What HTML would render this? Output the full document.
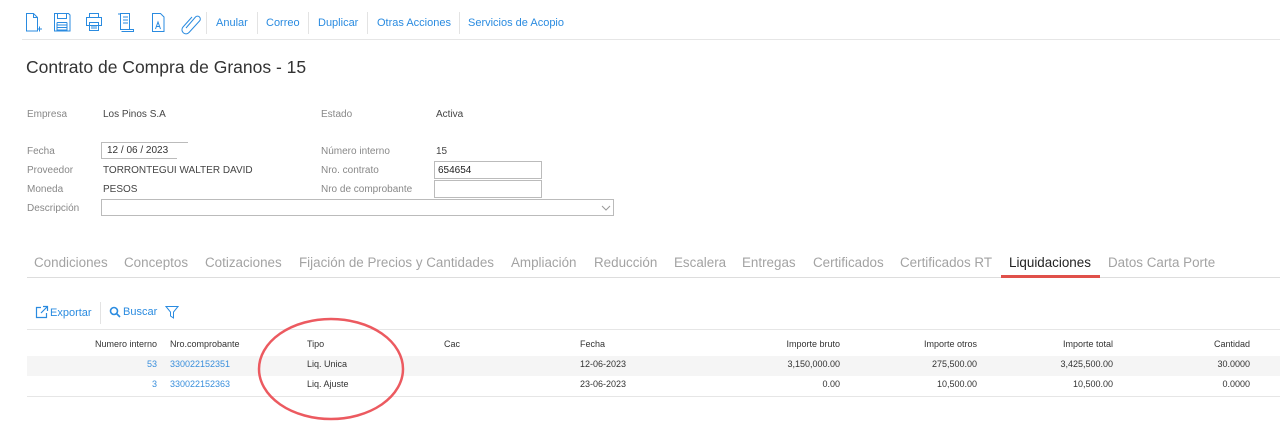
<!DOCTYPE html>
<html><head><meta charset="utf-8"><style>
*{margin:0;padding:0;box-sizing:border-box}
body{width:1280px;height:447px;background:#fff;font-family:"Liberation Sans",sans-serif;position:relative;overflow:hidden;color:#333}
.a{position:absolute;white-space:nowrap}
.lbl{font-size:10px;color:#888}
.val{font-size:10px;color:#444}
.tb{font-size:11px;color:#2a8be0;top:17px}
.sep{position:absolute;width:1px;background:#e3e3e3}
.tab{font-size:13.4px;color:#a3a3a3;top:255px}
.inp{position:absolute;border:1px solid #bbb;height:18px;font-size:10px;padding:3px 3px;color:#222}
.th{font-size:9px;color:#333;top:339px}
.td{font-size:9px;color:#333}
.lk{color:#3a8fdc}
.r{text-align:right}
</style></head><body>
<svg class="a" style="left:0;top:0" width="600" height="40" fill="none" stroke="#2a8be0" stroke-width="1">
<path d="M865 9 Q885 0 905 9" stroke="#ccc"/>
<path d="M26.5 13.5h7l4 4v13.5h-11z M33.5 13.5v4h4 M37 29h5 M39.5 26.5v5"/>
<path d="M54.5 13.5h14l1.5 1.5v16h-15.5z M57.5 13.5v5h9v-5 M57 22.5h10 M57 25h10 M57 27.5h10 M57 22.5v7.5h10v-7.5"/>
<path d="M89.5 13.5h9v4h-9z M86.5 17.5h15v8h-15z M89.5 22.5h9v8h-9z M91 26h6 M91 28h6"/>
<path d="M120.5 13.5h9v16h-9z M118 14h3 M123 17h5 M123 20h5 M123 23h5 M129.5 29.5h4v2h-12"/>
<path d="M152.5 13.5h8l3.5 3.5v14.5h-11.5z M155.5 29l2.5-7 2.5 7 M156.3 26.5h3.4"/>
<path d="M186 28l9.5-11a2.8 2.8 0 0 1 4 4l-10.5 11.5a4 4 0 0 1-6-5.5l9-10"/>
</svg>
<div class="sep" style="left:206px;top:12px;height:22px"></div>
<div class="a tb" style="left:216px">Anular</div>
<div class="sep" style="left:257px;top:12px;height:22px"></div>
<div class="a tb" style="left:266px">Correo</div>
<div class="sep" style="left:308px;top:12px;height:22px"></div>
<div class="a tb" style="left:318px">Duplicar</div>
<div class="sep" style="left:367px;top:12px;height:22px"></div>
<div class="a tb" style="left:377px">Otras Acciones</div>
<div class="sep" style="left:459px;top:12px;height:22px"></div>
<div class="a tb" style="left:468px">Servicios de Acopio</div>
<div class="a" style="left:22px;top:39px;width:1258px;height:1px;background:#e6e6e6"></div>

<div class="a" style="left:26px;top:57px;font-size:17.5px;color:#333">Contrato de Compra de Granos - 15</div>

<div class="a lbl" style="left:27px;top:109px">Empresa</div>
<div class="a val" style="left:103px;top:109px">Los Pinos S.A</div>
<div class="a lbl" style="left:321px;top:109px">Estado</div>
<div class="a val" style="left:436px;top:109px">Activa</div>

<div class="a lbl" style="left:27px;top:146px">Fecha</div>
<div class="a" style="left:101px;top:142px;width:76px;height:17px;border:1px solid #bbb;border-right:none"></div>
<div class="a" style="left:175px;top:142px;width:13px;height:1px;background:#bbb"></div>
<div class="a val" style="left:107px;top:145px;color:#333">12 / 06 /  2023</div>
<div class="a lbl" style="left:321px;top:146px">Número interno</div>
<div class="a val" style="left:436px;top:146px">15</div>

<div class="a lbl" style="left:27px;top:165px">Proveedor</div>
<div class="a val" style="left:103px;top:165px">TORRONTEGUI WALTER DAVID</div>
<div class="a lbl" style="left:321px;top:165px">Nro. contrato</div>
<div class="inp" style="left:434px;top:161px;width:108px">654654</div>

<div class="a lbl" style="left:27px;top:184px">Moneda</div>
<div class="a val" style="left:103px;top:184px">PESOS</div>
<div class="a lbl" style="left:321px;top:184px">Nro de comprobante</div>
<div class="inp" style="left:434px;top:180px;width:108px"></div>

<div class="a lbl" style="left:27px;top:203px">Descripción</div>
<div class="inp" style="left:101px;top:199px;width:513px;height:17px"></div>
<svg class="a" style="left:601px;top:204px" width="10" height="8"><path d="M1 2l4 4 4-4" fill="none" stroke="#999"/></svg>

<div class="a tab" style="left:34px">Condiciones</div>
<div class="a tab" style="left:124px">Conceptos</div>
<div class="a tab" style="left:205px">Cotizaciones</div>
<div class="a tab" style="left:299px">Fijación de Precios y Cantidades</div>
<div class="a tab" style="left:511px">Ampliación</div>
<div class="a tab" style="left:594px">Reducción</div>
<div class="a tab" style="left:674px">Escalera</div>
<div class="a tab" style="left:742px">Entregas</div>
<div class="a tab" style="left:813px">Certificados</div>
<div class="a tab" style="left:900px">Certificados RT</div>
<div class="a tab" style="left:1009px;color:#222">Liquidaciones</div>
<div class="a tab" style="left:1108px">Datos Carta Porte</div>
<div class="a" style="left:27px;top:277px;width:1253px;height:1px;background:#ddd"></div>
<div class="a" style="left:1001px;top:275px;width:99px;height:3px;background:#e0504a"></div>

<svg class="a" style="left:35px;top:305px" width="14" height="14" fill="none" stroke="#2a8be0" stroke-width="1.2"><path d="M6 2.5H1.5v10h10V8 M8 1.5h4.5V6 M12.5 1.5L6 8"/></svg>
<div class="a" style="left:50px;top:307px;font-size:11px;color:#2a8be0">Exportar</div>
<div class="sep" style="left:100px;top:302px;height:22px"></div>
<svg class="a" style="left:109px;top:306px" width="12" height="12" fill="none" stroke="#2a8be0" stroke-width="1.6"><circle cx="5" cy="5" r="3.5"/><path d="M7.5 7.5l3.5 3.5"/></svg>
<div class="a" style="left:123px;top:306px;font-size:11px;color:#2a8be0">Buscar</div>
<svg class="a" style="left:165px;top:305px" width="14" height="14" fill="none" stroke="#2a8be0" stroke-width="1"><path d="M1 1.5h12l-4.5 5.5v6l-3-2v-4z"/></svg>

<div class="a" style="left:27px;top:329px;width:1253px;height:1px;background:#e6e6e6"></div>
<div class="a" style="left:27px;top:356px;width:1253px;height:20px;background:#f5f5f5"></div>
<div class="a" style="left:27px;top:396px;width:1253px;height:1px;background:#e6e6e6"></div>

<div class="a th r" style="left:57px;width:100px">Numero interno</div>
<div class="a th" style="left:170px">Nro.comprobante</div>
<div class="a th" style="left:307px">Tipo</div>
<div class="a th" style="left:444px">Cac</div>
<div class="a th" style="left:580px">Fecha</div>
<div class="a th r" style="left:700px;width:140px">Importe bruto</div>
<div class="a th r" style="left:837px;width:140px">Importe otros</div>
<div class="a th r" style="left:973px;width:140px">Importe total</div>
<div class="a th r" style="left:1110px;width:140px">Cantidad</div>

<div class="a td lk r" style="left:57px;width:100px;top:359px">53</div>
<div class="a td lk" style="left:170px;top:359px">330022152351</div>
<div class="a td" style="left:307px;top:359px">Liq. Unica</div>
<div class="a td" style="left:580px;top:359px">12-06-2023</div>
<div class="a td r" style="left:700px;width:140px;top:359px">3,150,000.00</div>
<div class="a td r" style="left:837px;width:140px;top:359px">275,500.00</div>
<div class="a td r" style="left:973px;width:140px;top:359px">3,425,500.00</div>
<div class="a td r" style="left:1110px;width:140px;top:359px">30.0000</div>

<div class="a td lk r" style="left:57px;width:100px;top:379px">3</div>
<div class="a td lk" style="left:170px;top:379px">330022152363</div>
<div class="a td" style="left:307px;top:379px">Liq. Ajuste</div>
<div class="a td" style="left:580px;top:379px">23-06-2023</div>
<div class="a td r" style="left:700px;width:140px;top:379px">0.00</div>
<div class="a td r" style="left:837px;width:140px;top:379px">10,500.00</div>
<div class="a td r" style="left:973px;width:140px;top:379px">10,500.00</div>
<div class="a td r" style="left:1110px;width:140px;top:379px">0.0000</div>

<svg class="a" style="left:0;top:0" width="1280" height="447"><ellipse cx="331" cy="369" rx="72" ry="50" fill="none" stroke="#ec5a60" stroke-width="2.5"/></svg>
</body></html>
